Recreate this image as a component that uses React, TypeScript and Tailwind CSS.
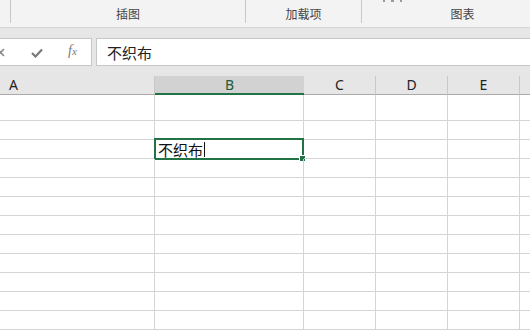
import React from "react";

const cols = [
  { key: "A", label: "A", w: 155, sel: false, align: "pl-[9px] justify-start" },
  { key: "B", label: "B", w: 149, sel: true, align: "justify-center" },
  { key: "C", label: "C", w: 72, sel: false, align: "justify-center" },
  { key: "D", label: "D", w: 72, sel: false, align: "justify-center" },
  { key: "E", label: "E", w: 72, sel: false, align: "justify-center" },
  { key: "F", label: "", w: 72, sel: false, align: "justify-center" },
];

const rowHeights = [25, 18, 18, 18, 18, 18, 18, 18, 18, 18, 18, 18, 18];

export default function App() {
  return (
    <div
      className="w-[530px] h-[330px] overflow-hidden bg-white flex flex-col"
      style={{ fontFamily: '"Noto Sans", "Noto Sans CJK SC", sans-serif' }}
    >
      {/* Ribbon */}
      <div className="h-[28px] shrink-0 bg-[#f3f3f3] border-b border-[#d5d5d5] flex items-start relative overflow-hidden">
        <div className="w-[10px] shrink-0" />
        <div className="w-[235px] shrink-0 h-[23px] border-l border-[#c8c8c8] flex items-end justify-center text-[12px] leading-none text-[#444] pb-[3px]" style={{ fontFamily: '"Noto Sans CJK SC", sans-serif' }}>
          插图
        </div>
        <div className="w-[116px] shrink-0 h-[23px] border-l border-[#c8c8c8] flex items-end justify-center text-[12px] leading-none text-[#444] pb-[3px]" style={{ fontFamily: '"Noto Sans CJK SC", sans-serif' }}>
          加载项
        </div>
        <div className="w-[202px] shrink-0 h-[23px] border-l border-[#c8c8c8] flex items-end justify-center text-[12px] leading-none text-[#444] pb-[3px]" style={{ fontFamily: '"Noto Sans CJK SC", sans-serif' }}>
          图表
        </div>
        <div className="absolute left-[383px] top-0 flex gap-[6px]">
          <span className="block w-[2px] h-[2px] bg-[#9a9a9a]" />
          <span className="block w-[3px] h-[2px] bg-[#9a9a9a]" />
          <span className="block w-[2px] h-[2px] bg-[#9a9a9a]" />
        </div>
      </div>

      {/* Formula bar band */}
      <div className="shrink-0 bg-[#e6e6e6] pt-[10px] pb-[10px] flex items-stretch">
        <div className="ml-[-3px] w-[95px] h-[28px] bg-white border border-[#c6c6c6] flex items-center relative shrink-0">
          <svg className="absolute left-[-2px] top-[9px]" width="9" height="9" viewBox="0 0 9 9">
            <path d="M1 1 L8 8 M8 1 L1 8" stroke="#8a8a8a" strokeWidth="1.6" fill="none" />
          </svg>
          <svg className="absolute left-[33px] top-[9px]" width="12" height="10" viewBox="0 0 12 10">
            <path d="M1 5 L4.5 8.5 L11 1.5" stroke="#7a7a7a" strokeWidth="2.2" fill="none" />
          </svg>
          <span
            className="absolute left-[70px] top-[5px] text-[14px] italic text-[#7a7a7a] leading-none"
            style={{ fontFamily: '"Liberation Serif", serif' }}
          >
            f<span className="text-[11px]">x</span>
          </span>
        </div>
        <div className="ml-[4px] flex-1 h-[28px] bg-white border border-[#c6c6c6] border-r-0 flex items-center pl-[10px]">
          <span className="text-[15px] leading-none text-[#222]" style={{ fontFamily: '"Noto Sans CJK SC", sans-serif' }}>
            不织布
          </span>
        </div>
      </div>

      {/* Column header */}
      <div className="shrink-0 h-[19px] bg-[#e6e6e6] flex">
        {cols.map((c) => (
          <div
            key={c.key}
            style={{ width: c.w }}
            className={
              c.sel
                ? "shrink-0 h-full bg-[#d2d2d2] border-b-2 border-[#217346] flex items-end text-[14px] leading-[17px] text-[#1e5c3a] justify-center"
                : `shrink-0 h-full border-b border-[#ababab] border-r border-r-[#c8c8c8] flex items-end text-[14px] leading-[18px] text-[#222] ${c.align}`
            }
          >
            {c.label}
          </div>
        ))}
      </div>

      {/* Grid */}
      <div className="flex-1 flex flex-col">
        {rowHeights.map((h, r) => (
          <div key={r} className="flex shrink-0">
            {cols.map((c) => (
              <div
                key={c.key}
                style={{ width: c.w, height: h + 1 }}
                className="shrink-0 border-b border-[#d4d4d4] border-r border-r-[#d4d4d4] relative"
              >
                {r === 2 && c.key === "B" && (
                  <>
                    <div className="absolute left-[-1px] top-[-2px] right-[-1px] bottom-[-2px] border-2 border-[#217346] pointer-events-none" />
                    <div className="absolute right-[-3px] bottom-[-4px] w-[5px] h-[5px] bg-[#217346] border border-white box-content" />
                    <div className="absolute left-[3px] top-[1px] flex items-center h-[17px]">
                      <span className="text-[15px] leading-none text-[#111]" style={{ fontFamily: '"Noto Sans CJK SC", sans-serif' }}>
                        不织布
                      </span>
                      <span className="inline-block w-px h-[15px] bg-[#111] ml-[1px]" />
                    </div>
                  </>
                )}
              </div>
            ))}
          </div>
        ))}
      </div>
    </div>
  );
}
